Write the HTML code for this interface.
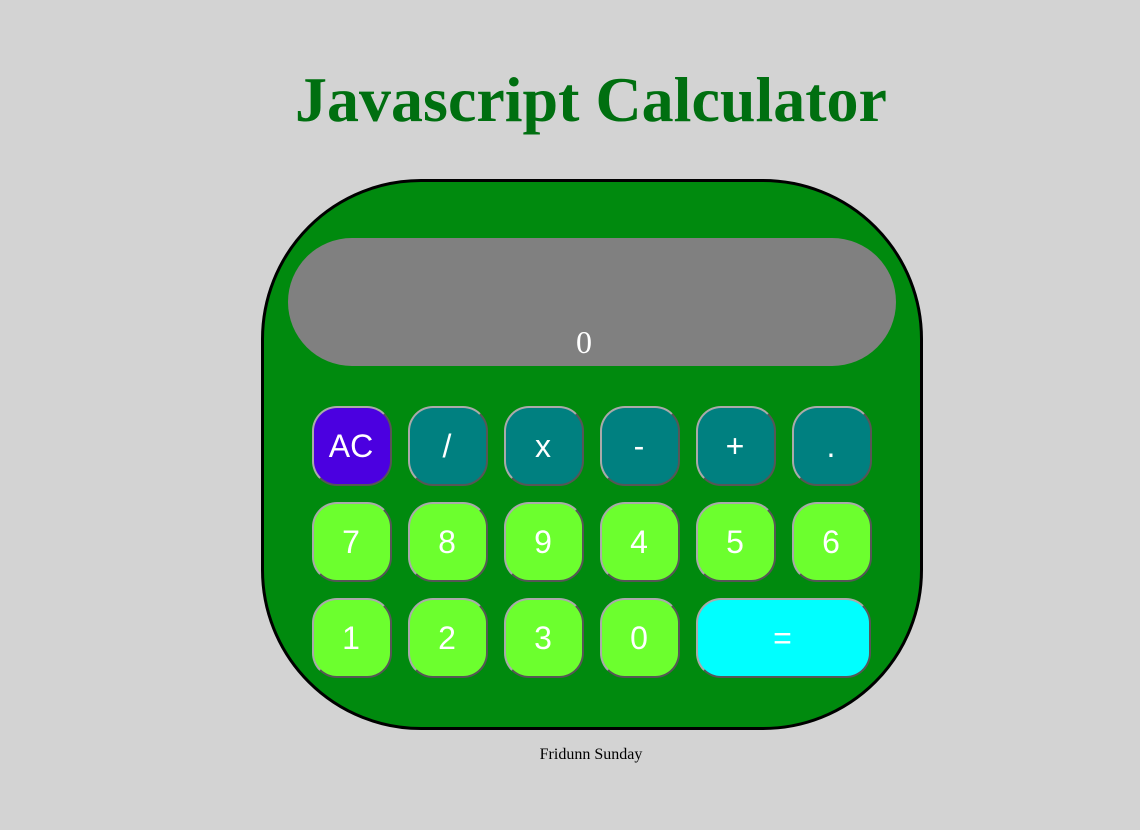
<!DOCTYPE html>
<html><head><style>
body{margin:0;width:1140px;height:830px;background:#d3d3d3;position:relative;overflow:hidden;font-family:"Liberation Sans",sans-serif}
h1{position:absolute;left:0;width:1182px;top:60px;margin:0;text-align:center;font:bold 64px/80px "Liberation Serif",serif;color:#006f10}
.calc{position:absolute;left:261px;top:179px;width:656px;height:545px;border:3px solid #000;border-radius:160px;background:#008a0e}
.disp{position:absolute;left:288px;top:238px;width:608px;height:128px;border-radius:64px;background:#808080}
.disp span{position:absolute;left:0;right:0;top:88px;text-align:center;color:#fff;font:32px/32px "Liberation Serif",serif;padding-right:16px}
.b{position:absolute;width:76px;height:76px;border:2px outset #aaa;border-radius:25px;color:#fff;font-size:32px;line-height:76px;text-align:center;box-sizing:content-box;text-indent:-2px}
.t{background:#008080}.g{background:#6cff2e}
.foot{position:absolute;left:0;width:1182px;top:746px;text-align:center;font:16px "Liberation Serif",serif}
</style></head><body>
<h1>Javascript Calculator</h1>
<div class="calc"></div>
<div class="disp"><span>0</span></div>
<div class="b" style="left:312px;top:406px;background:#4b00e0">AC</div>
<div class="b t" style="left:408px;top:406px">/</div>
<div class="b t" style="left:504px;top:406px">x</div>
<div class="b t" style="left:600px;top:406px">-</div>
<div class="b t" style="left:696px;top:406px">+</div>
<div class="b t" style="left:792px;top:406px">.</div>
<div class="b g" style="left:312px;top:502px">7</div>
<div class="b g" style="left:408px;top:502px">8</div>
<div class="b g" style="left:504px;top:502px">9</div>
<div class="b g" style="left:600px;top:502px">4</div>
<div class="b g" style="left:696px;top:502px">5</div>
<div class="b g" style="left:792px;top:502px">6</div>
<div class="b g" style="left:312px;top:598px">1</div>
<div class="b g" style="left:408px;top:598px">2</div>
<div class="b g" style="left:504px;top:598px">3</div>
<div class="b g" style="left:600px;top:598px">0</div>
<div class="b" style="left:696px;top:598px;width:171px;background:#00ffff">=</div>
<div class="foot">Fridunn Sunday</div>
</body></html>
